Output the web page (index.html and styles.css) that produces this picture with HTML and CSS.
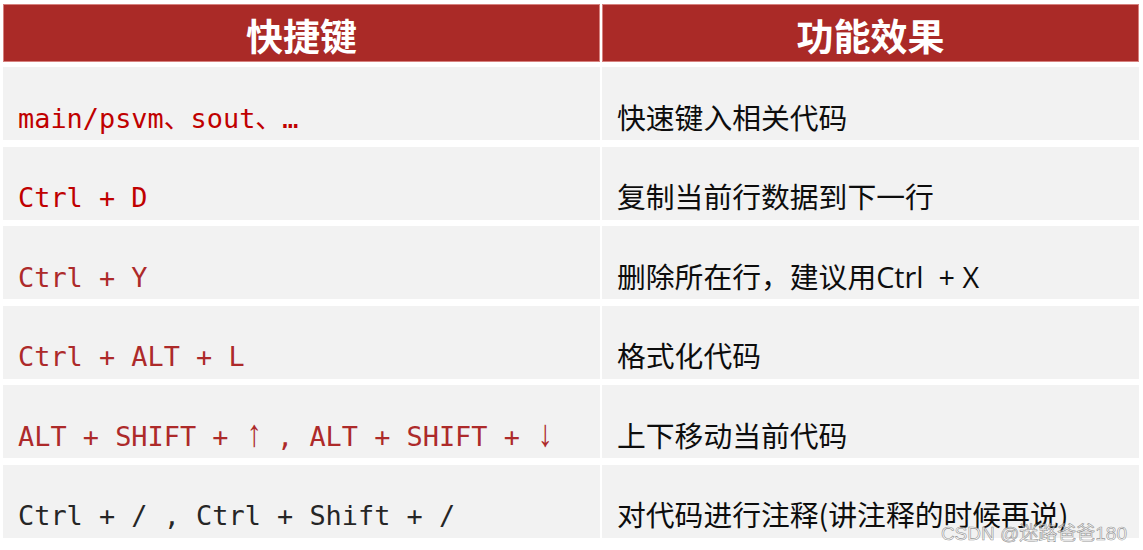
FILE: index.html
```html
<!DOCTYPE html>
<html lang="zh-CN">
<head>
<meta charset="utf-8">
<title>快捷键</title>
<link rel="stylesheet" href="styles.css">
</head>
<body>
<div class="page">
  <div class="table">
    <div class="row head">
      <div class="hcell">快捷键</div>
      <div class="hcell">功能效果</div>
    </div>
    <div class="body">
      <div class="row">
        <div class="key red1">main/psvm、sout、…</div>
        <div class="desc">快速键入相关代码</div>
      </div>
      <div class="row">
        <div class="key red1">Ctrl + D</div>
        <div class="desc">复制当前行数据到下一行</div>
      </div>
      <div class="row">
        <div class="key red2">Ctrl + Y</div>
        <div class="desc">删除所在行，建议用<span class="latin">Ctrl&nbsp; + X</span></div>
      </div>
      <div class="row">
        <div class="key red2">Ctrl + ALT + L</div>
        <div class="desc">格式化代码</div>
      </div>
      <div class="row">
        <div class="key red2">ALT + SHIFT + <span class="arrow">↑</span> , ALT + SHIFT + <span class="arrow">↓</span></div>
        <div class="desc">上下移动当前代码</div>
      </div>
      <div class="row">
        <div class="key dark">Ctrl + / , Ctrl + Shift + /</div>
        <div class="desc">对代码进行注释(讲注释的时候再说)</div>
      </div>
    </div>
  </div>
  <div class="watermark">CSDN @迷路爸爸180</div>
</div>
</body>
</html>
```

FILE: styles.css
```css
* { box-sizing: border-box; }
html, body { margin: 0; padding: 0; background: #ffffff; }
.page {
  position: relative;
  width: 1143px;
  height: 550px;
  padding: 4px 0 0 3px;
  overflow: hidden;
}
.table {
  display: flex;
  flex-direction: column;
  width: 1136px;
}
.row {
  display: grid;
  grid-template-columns: 597px 537px;
  column-gap: 2px;
  height: 73px;
}
.row.head { height: 58px; }
.hcell {
  background: #aa2a27;
  border: 1px solid #d6817e;
  color: #ffffff;
  font-family: "Noto Sans CJK SC", "Noto Sans", sans-serif;
  font-weight: 700;
  font-size: 37px;
  line-height: 52px;
  padding-top: 4px;
  text-align: center;
}
.body {
  display: flex;
  flex-direction: column;
  gap: 6.6px;
  margin-top: 5px;
}
.key, .desc {
  background: #f2f2f2;
  padding-left: 15px;
  white-space: nowrap;
}
.key {
  font-family: "DejaVu Sans Mono", "Noto Sans CJK SC", monospace;
  font-size: 26.9px;
  line-height: 32px;
  padding-top: 35.5px;
}
.arrow {
  display: inline-block;
  width: 16.2px;
  text-align: center;
  font-family: "Liberation Sans", "DejaVu Sans", sans-serif;
  font-size: 38px;
  line-height: 0;
  transform: scaleX(0.8);
}
.desc {
  font-family: "Noto Sans CJK SC", "Noto Sans", sans-serif;
  font-size: 28.8px;
  line-height: 32px;
  padding-top: 33.5px;
  color: #0d0d0d;
}
.latin {
  font-family: "Open Sans", "Noto Sans CJK SC", sans-serif;
}
.red1 { color: #c00000; }
.red2 { color: #ad2a2a; }
.dark { color: #262626; }
.watermark {
  position: absolute;
  right: 16px;
  top: 524px;
  font-family: "Liberation Sans", "Noto Sans CJK SC", sans-serif;
  font-size: 19px;
  line-height: 19px;
  color: rgba(255, 255, 255, 0.55);
  -webkit-text-stroke: 0.6px rgba(110, 110, 110, 0.75);
  white-space: nowrap;
}
```
